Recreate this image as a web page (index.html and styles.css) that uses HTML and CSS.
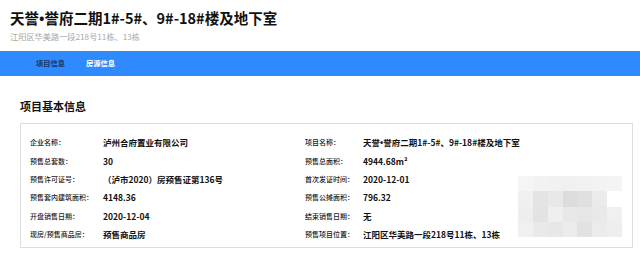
FILE: index.html
```html
<!DOCTYPE html>
<html lang="zh-CN">
<head>
    <meta charset="UTF-8">
    <meta name="viewport" content="width=device-width, initial-scale=1.0">
    <title>天誉•誉府二期</title>
    <link rel="stylesheet" href="styles.css">
</head>
<body>
    <div class="header">
        <h1 class="title">天誉<span class="dot">•</span>誉府二期1#-5#、9#-18#楼及地下室</h1>
        <div class="address">江阳区华美路一段218号11栋、13栋</div>
    </div>

    <div class="nav">
        <a class="nav-item active">项目信息</a>
        <a class="nav-item">房源信息</a>
    </div>

    <div class="main">
        <h2 class="section-title">项目基本信息</h2>
        <div class="info-box">
            <!-- blurred picture on the right -->
            <svg class="mosaic" viewBox="0 0 7 4" preserveAspectRatio="none" shape-rendering="crispEdges">
                <rect x="0" y="0" width="1" height="1" fill="#f5f5f5"/>
                <rect x="1" y="0" width="1" height="1" fill="#f2f2f2"/>
                <rect x="2" y="0" width="1" height="1" fill="#f1f1f1"/>
                <rect x="3" y="0" width="1" height="1" fill="#f0f0f0"/>
                <rect x="4" y="0" width="1" height="1" fill="#f2f2f2"/>
                <rect x="5" y="0" width="1" height="1" fill="#f3f3f3"/>
                <rect x="6" y="0" width="1" height="1" fill="#f4f4f4"/>
                <rect x="0" y="1" width="1" height="1" fill="#f0f0f0"/>
                <rect x="1" y="1" width="1" height="1" fill="#e4e4e4"/>
                <rect x="2" y="1" width="1" height="1" fill="#e8e8e8"/>
                <rect x="3" y="1" width="1" height="1" fill="#dcdcdc"/>
                <rect x="4" y="1" width="1" height="1" fill="#e0e0e0"/>
                <rect x="5" y="1" width="1" height="1" fill="#ebebeb"/>
                <rect x="6" y="1" width="1" height="1" fill="#ffffff"/>
                <rect x="0" y="2" width="1" height="1" fill="#eeeeee"/>
                <rect x="1" y="2" width="1" height="1" fill="#e3e3e3"/>
                <rect x="2" y="2" width="1" height="1" fill="#efefef"/>
                <rect x="3" y="2" width="1" height="1" fill="#e8e8e8"/>
                <rect x="4" y="2" width="1" height="1" fill="#e6e6e6"/>
                <rect x="5" y="2" width="1" height="1" fill="#e9e9e9"/>
                <rect x="6" y="2" width="1" height="1" fill="#f0f0f0"/>
                <rect x="0" y="3" width="1" height="1" fill="#f0f0f0"/>
                <rect x="1" y="3" width="1" height="1" fill="#e9e9e9"/>
                <rect x="2" y="3" width="1" height="1" fill="#e7e7e7"/>
                <rect x="3" y="3" width="1" height="1" fill="#ececec"/>
                <rect x="4" y="3" width="1" height="1" fill="#e2e2e2"/>
                <rect x="5" y="3" width="1" height="1" fill="#ebebeb"/>
                <rect x="6" y="3" width="1" height="1" fill="#eeeeee"/>
            </svg>

            <span class="label col1">企业名称：</span>
            <span class="value col2">泸州合府置业有限公司</span>
            <span class="label col3">项目名称：</span>
            <span class="value col4">天誉<span class="dot">•</span>誉府二期1#-5#、9#-18#楼及地下室</span>

            <span class="label col1">预售总套数：</span>
            <span class="value col2">30</span>
            <span class="label col3">预售总面积：</span>
            <span class="value col4">4944.68m²</span>

            <span class="label col1">预售许可证号：</span>
            <span class="value col2">（泸市2020）房预售证第136号</span>
            <span class="label col3">首次发证时间：</span>
            <span class="value col4">2020-12-01</span>

            <span class="label col1">预售套内建筑面积：</span>
            <span class="value col2">4148.36</span>
            <span class="label col3">预售公摊面积：</span>
            <span class="value col4">796.32</span>

            <span class="label col1">开盘销售日期：</span>
            <span class="value col2">2020-12-04</span>
            <span class="label col3">结束销售日期：</span>
            <span class="value col4">无</span>

            <span class="label col1">现房/预售商品房：</span>
            <span class="value col2">预售商品房</span>
            <span class="label col3">预售项目位置：</span>
            <span class="value col4">江阳区华美路一段218号11栋、13栋</span>
        </div>
    </div>
</body>
</html>
```

FILE: styles.css
```css
/* General Styles */
body {
    margin: 0;
    background-color: #fff;
    color: #111;
    font-family: "Noto Sans CJK SC", "Noto Sans", sans-serif;
}

/* narrow bullet instead of the full-width CJK one */
.dot {
    font-family: "Noto Sans", sans-serif;
}

/* Header */
.header {
    padding: 8px 10px 0;
}

.title {
    margin: 0;
    font-size: 14.5px;
    line-height: 20px;
    font-weight: bold;
    color: #111;
}

.address {
    margin-top: 1px;
    font-size: 8.2px;
    line-height: 14px;
    color: #a8a8a8;
}

/* Blue nav bar */
.nav {
    display: flex;
    gap: 21px;
    margin-top: 8px;
    height: 25px;
    padding-left: 36px;
    background-color: #2f8bfd;
}

.nav-item {
    font-size: 7.25px;
    line-height: 25px;
    font-weight: bold;
    color: #fff;
}

.nav-item.active {
    color: #1c3563;
}

/* Main content */
.main {
    margin: 0 7px 0 20px;
}

.section-title {
    margin: 22px 0 9px;
    font-size: 11px;
    line-height: 16px;
    font-weight: bold;
    color: #111;
}

.info-box {
    display: grid;
    grid-template-columns: 73px 202px 58px 155px 104px;
    grid-template-rows: repeat(6, 18.4px);
    align-items: center;
    padding: 9px 10px 4px 9px;
    border: 1px solid #ddd;
    background-color: #fff;
}

.label {
    font-size: 7px;
    font-weight: 500;
    color: #1a1a1a;
    white-space: nowrap;
}

.value {
    font-size: 8.5px;
    font-weight: bold;
    color: #111;
    white-space: nowrap;
}

.col1 { grid-column: 1; }
.col2 { grid-column: 2; }
.col3 { grid-column: 3; }
.col4 { grid-column: 4; }

.mosaic {
    grid-column: 5;
    grid-row: 3 / 7;
    width: 104px;
    height: 61px;
}
```
